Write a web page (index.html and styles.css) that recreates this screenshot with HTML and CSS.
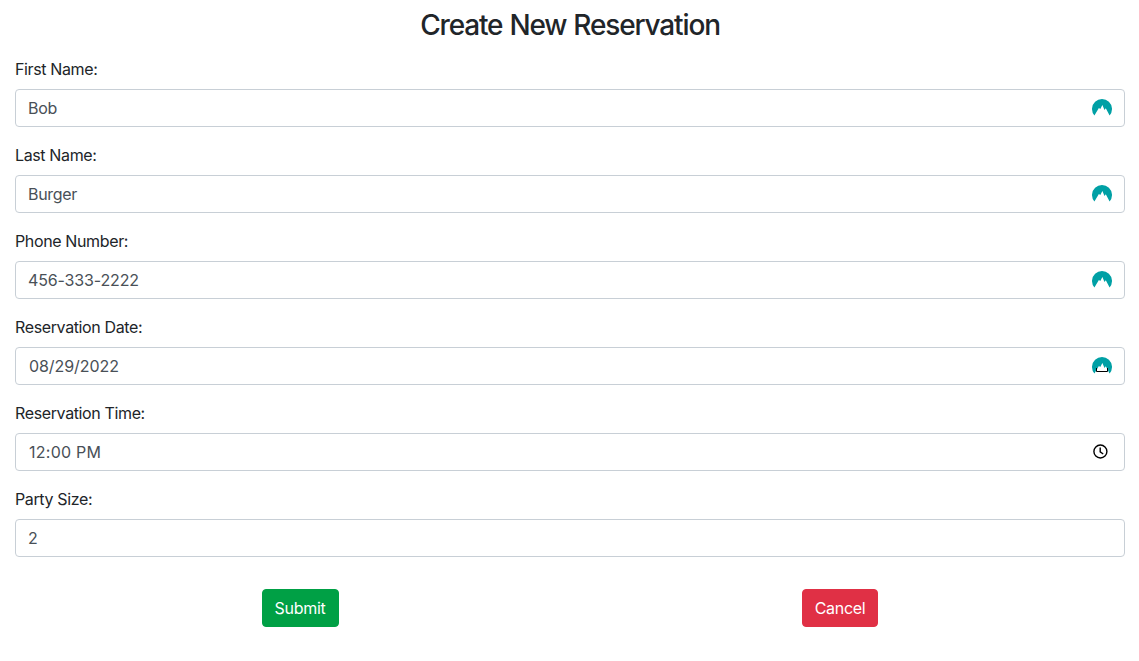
FILE: index.html
```html
<!DOCTYPE html>
<html lang="en">
<head>
<meta charset="utf-8">
<title>Create New Reservation</title>
<link rel="stylesheet" href="styles.css">
</head>
<body>
<svg class="sprite" aria-hidden="true">
  <symbol id="peak" viewBox="0 0 20 20">
    <path fill="#00a0a5" d="M2.4 16.5A10 10 0 1 1 17.6 16.5L13.8 9.2l-1.3 1.7L10.4 6 8.3 10l-1.4-1z"/>
  </symbol>
</svg>
<main class="page">
  <h1 class="title">Create New Reservation</h1>
  <form class="form">
    <div class="group"><span class="label">First Name:</span><div class="field"><span class="value">Bob</span><svg class="peak"><use href="#peak"/></svg></div></div>
    <div class="group"><span class="label">Last Name:</span><div class="field"><span class="value">Burger</span><svg class="peak"><use href="#peak"/></svg></div></div>
    <div class="group"><span class="label">Phone Number:</span><div class="field"><span class="value value-phone">456-333-2222</span><svg class="peak"><use href="#peak"/></svg></div></div>
    <div class="group"><span class="label">Reservation Date:</span><div class="field field-picker"><span class="value value-date">08/29/2022</span><svg class="peak"><use href="#peak"/><path d="M4.5 11v3.5h11V11" fill="none" stroke="#000"/></svg></div></div>
    <div class="group"><span class="label">Reservation Time:</span><div class="field field-picker"><span class="value value-time">12:00 PM</span><svg class="clock" viewBox="0 0 16 16"><circle cx="8.4" cy="7.5" r="6.5"/><path d="M8.2 3.6v4.2l3 2.2"/></svg></div></div>
    <div class="group"><span class="label">Party Size:</span><div class="field"><span class="value">2</span></div></div>
    <div class="actions">
      <div class="action"><button type="button" class="btn submit">Submit</button></div>
      <div class="action"><button type="button" class="btn cancel">Cancel</button></div>
    </div>
  </form>
</main>
</body>
</html>
```
FILE: styles.css
```css
* { box-sizing: border-box; }
body { margin: 0; background: #fff; color: #212529; font: 16px/24px Inter, sans-serif; }
.sprite { position: absolute; width: 0; height: 0; }
.page { padding: 8px 14px 0 15px; }
.title { margin: 0 0 15px; font-size: 28px; line-height: 34px; font-weight: 500; text-align: center; letter-spacing: -1.15px; word-spacing: 0.7px; }
.group { margin-bottom: 16px; }
.label { display: block; margin-bottom: 8px; letter-spacing: -0.37px; }
.field { display: flex; align-items: center; justify-content: space-between; height: 38px; padding: 0 12px; border: 1px solid #c8cfd6; border-radius: 4px; color: #495057; }
.field-picker { padding-left: 13px; }
.value { letter-spacing: -0.3px; }
.value-phone { letter-spacing: -0.15px; }
.value-date { letter-spacing: -0.07px; }
.value-time { letter-spacing: 0.25px; }
.peak { width: 20px; height: 20px; margin-top: 2px; }
.clock { width: 16px; height: 16px; margin-right: 4px; fill: none; stroke: #000; stroke-width: 1.4; }
.actions { display: flex; padding: 16px 15px 0; }
.action { flex: 1; text-align: center; }
.btn { height: 38px; padding: 0; border: 1px solid; border-radius: 4px; color: #fff; font: inherit; letter-spacing: -0.3px; }
.submit { width: 77px; background: #00a045; border-color: #00a045; }
.cancel { width: 76px; background: #e03045; border-color: #e03045; }
```
